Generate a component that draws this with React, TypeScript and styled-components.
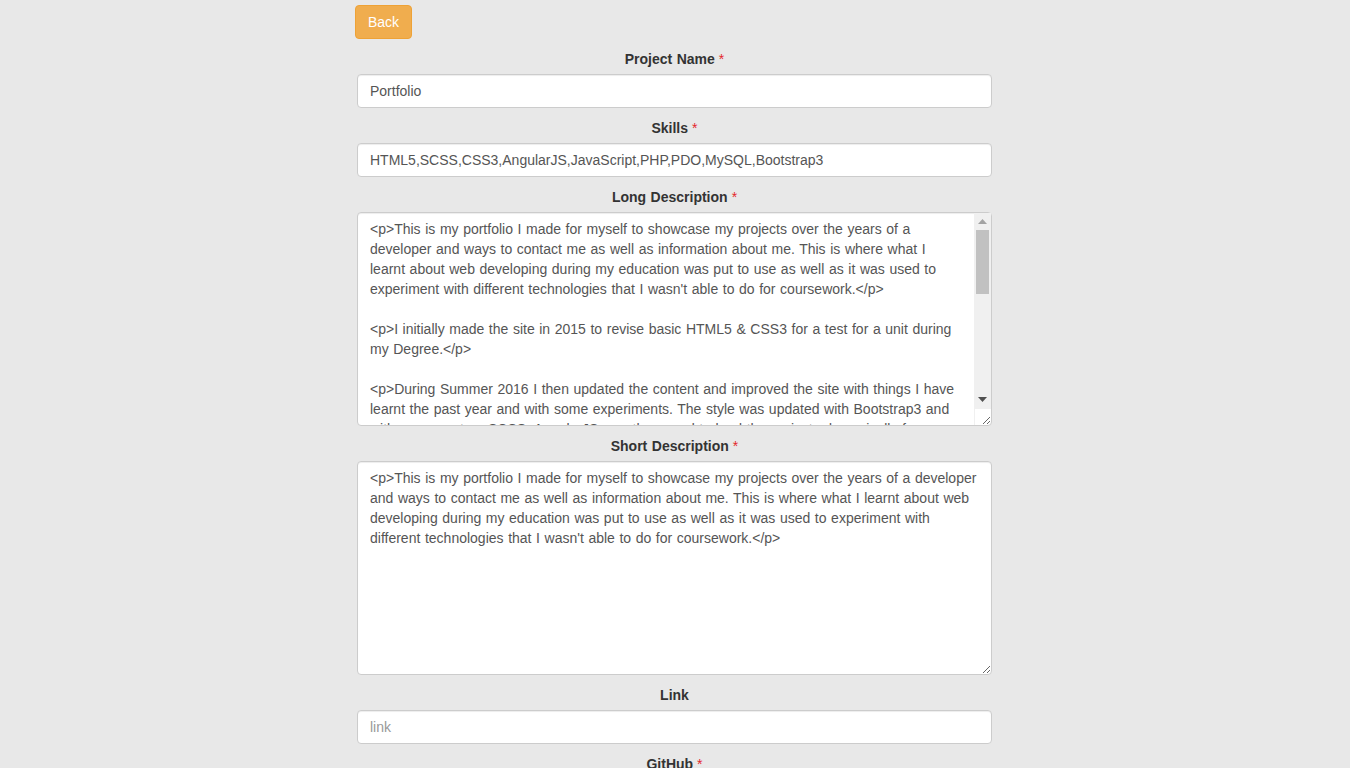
import React from "react";
import styled, { createGlobalStyle } from "styled-components";

const GlobalStyle = createGlobalStyle`
  html, body {
    margin: 0;
    padding: 0;
    background: #e8e8e8;
  }
  body {
    font-family: "Liberation Sans", Arial, Helvetica, sans-serif;
    font-size: 14px;
    line-height: 20px;
    color: #333;
  }
  * { box-sizing: border-box; }
`;

const Page = styled.div`
  padding-top: 5px;
  padding-bottom: 40px;
`;

const Column = styled.div`
  width: 635px;
  margin-left: calc(50% - 318px);
`;

const BackButton = styled.button`
  display: inline-block;
  margin-left: -2px;
  height: 34px;
  padding: 6px 12px;
  font-family: inherit;
  font-size: 14px;
  line-height: 20px;
  color: #fff;
  background: #f0ad4e;
  border: 1px solid #eea236;
  border-radius: 4px;
  cursor: pointer;
`;

const Form = styled.form`
  display: flex;
  flex-direction: column;
  margin-top: 10px;
`;

const Group = styled.div`
  display: flex;
  flex-direction: column;
  margin-bottom: 10px;
`;

const Label = styled.label`
  display: block;
  text-align: center;
  font-weight: bold;
  font-size: 14px;
  line-height: 20px;
  margin-bottom: 5px;
  color: #333;
  word-spacing: 0.6px;
`;

const Required = styled.span`
  color: #e4262c;
  font-weight: normal;
  margin-left: 4px;
`;

const fieldCss = `
  display: block;
  width: 100%;
  padding: 6px 12px;
  font-family: "Liberation Sans", Arial, Helvetica, sans-serif;
  font-size: 14px;
  line-height: 20px;
  color: #555;
  background: #fff;
  border: 1px solid #ccc;
  border-radius: 4px;
  box-shadow: inset 0 1px 1px rgba(0,0,0,.075);
  outline: none;
  margin: 0;
  word-spacing: 0.7px;
  &::placeholder { color: #999; }
`;

const Input = styled.input`
  ${fieldCss}
  height: 34px;
`;

const TextArea = styled.textarea<{ $scroll?: boolean }>`
  ${fieldCss}
  height: 214px;
  resize: vertical;
  overflow: hidden;
  padding-right: ${(p) => (p.$scroll ? "29px" : "12px")};
`;

const AreaWrap = styled.div`
  position: relative;
`;

const ScrollBar = styled.div`
  position: absolute;
  top: 1px;
  right: 1px;
  bottom: 18px;
  width: 17px;
  display: flex;
  flex-direction: column;
  background: #f0f0f0;
  pointer-events: none;
`;

const ScrollButton = styled.div`
  flex: 0 0 17px;
  display: flex;
  align-items: center;
  justify-content: center;
`;

const Track = styled.div`
  flex: 1;
  display: flex;
  flex-direction: column;
  padding: 0 2px;
`;

const Thumb = styled.div`
  height: 64px;
  margin-top: 0;
  background: #c1c1c1;
`;

const Corner = styled.div`
  position: absolute;
  right: 1px;
  bottom: 1px;
  width: 17px;
  height: 17px;
  background: transparent;
  border-top: 1px solid #f0f0f0;
  border-left: 1px solid #f0f0f0;
  pointer-events: none;
`;

const longDesc = `<p>This is my portfolio I made for myself to showcase my projects over the years of a developer and ways to contact me as well as information about me. This is where what I learnt about web developing during my education was put to use as well as it was used to experiment with different technologies that I wasn't able to do for coursework.</p>

<p>I initially made the site in 2015 to revise basic HTML5 & CSS3 for a test for a unit during my Degree.</p>

<p>During Summer 2016 I then updated the content and improved the site with things I have learnt the past year and with some experiments. The style was updated with Bootstrap3 and with some custom SCSS. AngularJS was then used to load the projects dynamically from a database which is managed through an admin panel built with PHP, PDO and MySQL.</p>

<p>The admin panel allows me to add, edit and delete projects, as well as upload images for each project so the site always shows my latest work without me having to edit any of the HTML by hand.</p>

<p>In the future I plan to keep improving the site with new technologies I learn, such as adding a blog section, improving the performance of the pages and making the design even more responsive on smaller devices.</p>`;

const shortDesc = `<p>This is my portfolio I made for myself to showcase my projects over the years of a developer and ways to contact me as well as information about me. This is where what I learnt about web developing during my education was put to use as well as it was used to experiment with different technologies that I wasn't able to do for coursework.</p>`;

type FieldProps = { label: string; required?: boolean; children: React.ReactNode };

const Field = ({ label, required, children }: FieldProps) => (
  <Group>
    <Label>
      {label}
      {required && <Required>*</Required>}
    </Label>
    {children}
  </Group>
);

const ScrollingTextArea = ({ value }: { value: string }) => (
  <AreaWrap>
    <TextArea rows={10} defaultValue={value} $scroll />
    <ScrollBar>
      <ScrollButton>
        <svg width="9" height="5" viewBox="0 0 9 5">
          <polygon points="0,5 9,5 4.5,0" fill="#a3a3a3" />
        </svg>
      </ScrollButton>
      <Track>
        <Thumb />
      </Track>
      <ScrollButton>
        <svg width="9" height="5" viewBox="0 0 9 5">
          <polygon points="0,0 9,0 4.5,5" fill="#505050" />
        </svg>
      </ScrollButton>
    </ScrollBar>
    <Corner />
  </AreaWrap>
);

export default function App() {
  return (
    <>
      <GlobalStyle />
      <Page>
        <Column>
          <BackButton type="button">Back</BackButton>
          <Form onSubmit={(e) => e.preventDefault()}>
            <Field label="Project Name" required>
              <Input defaultValue="Portfolio" />
            </Field>
            <Field label="Skills" required>
              <Input defaultValue="HTML5,SCSS,CSS3,AngularJS,JavaScript,PHP,PDO,MySQL,Bootstrap3" />
            </Field>
            <Field label="Long Description" required>
              <ScrollingTextArea value={longDesc} />
            </Field>
            <Field label="Short Description" required>
              <TextArea rows={10} defaultValue={shortDesc} />
            </Field>
            <Field label="Link">
              <Input placeholder="link" />
            </Field>
            <Field label="GitHub" required>
              <Input placeholder="github" />
            </Field>
          </Form>
        </Column>
      </Page>
    </>
  );
}
